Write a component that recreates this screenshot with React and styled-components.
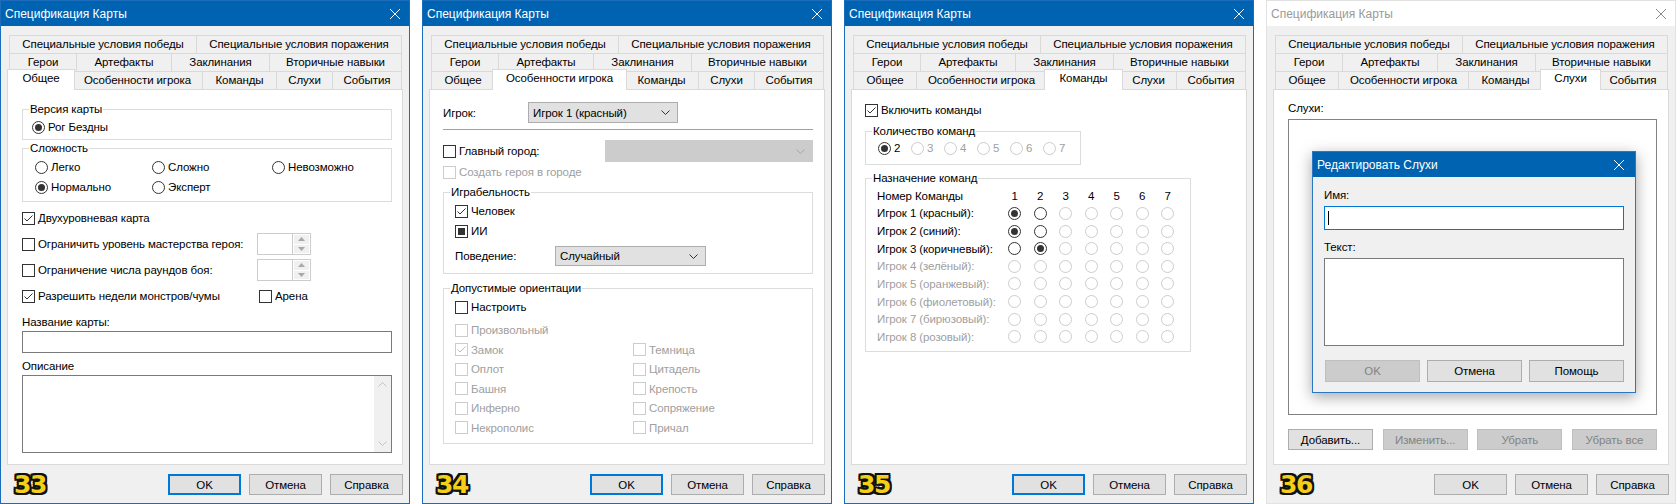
import React from "react";
import styled, { createGlobalStyle } from "styled-components";

const GlobalStyle = createGlobalStyle`
  html, body { margin: 0; padding: 0; background: #fff; }
  body {
    font-family: "Liberation Sans", Arial, sans-serif;
    font-size: 11.5px;
    letter-spacing: -0.1px;
    color: #000;
  }
  * { box-sizing: border-box; }
`;

const ROWS = [
  [["Специальные условия победы", 188], ["Специальные условия поражения", 206]],
  [["Герои", 68], ["Артефакты", 96], ["Заклинания", 99], ["Вторичные навыки", 133]],
  [["Общее", 64], ["Особенности игрока", 131], ["Команды", 75], ["Слухи", 57], ["События", 70]],
];

const Page = styled.div`
  display: flex;
  gap: 12px;
  width: 1676px;
  height: 504px;
`;

const Frame = styled.div`
  position: relative;
  width: 410px;
  height: 504px;
  flex-shrink: 0;
  display: flex;
  flex-direction: column;
  background: #f0f0f0;
  border: 1px solid ${(p) => (p.$active ? "#1b6dbb" : "#e2e2e2")};
`;

const TitleBar = styled.div`
  height: 25px;
  flex-shrink: 0;
  display: flex;
  align-items: center;
  justify-content: space-between;
  padding-left: 4px;
  font-size: 12px;
  letter-spacing: 0;
  background: ${(p) => (p.$active ? "#0063b1" : "#fff")};
  color: ${(p) => (p.$active ? "#fff" : "#9a9a9a")};
`;

const CloseBtn = styled.div`
  width: ${(p) => p.$w || 28}px;
  height: 100%;
  display: flex;
  align-items: center;
  justify-content: center;
`;

const Body = styled.div`
  flex: 1;
  padding: 9px 6px 0;
  display: flex;
  flex-direction: column;
`;

const TabArea = styled.div`
  padding: 0 1px 0 2px;
`;

const TabRow = styled.div`
  display: flex;
  align-items: flex-start;
  height: 18px;
`;

const Tab = styled.div`
  flex-shrink: 0;
  width: ${(p) => p.$w + (p.$sel ? 4 : 0)}px;
  height: ${(p) => (p.$sel ? 21 : 18)}px;
  margin-top: ${(p) => (p.$sel ? -2 : 0)}px;
  margin-left: ${(p) => (p.$first ? 0 : -1) - (p.$sel ? 2 : 0)}px;
  margin-right: ${(p) => (p.$sel ? -2 : 0)}px;
  border: 1px solid #d9d9d9;
  border-bottom: none;
  background: ${(p) => (p.$sel ? "#fff" : "#f0f0f0")};
  position: relative;
  z-index: ${(p) => (p.$sel ? 2 : 1)};
  text-align: center;
  line-height: ${(p) => (p.$sel ? 17 : 16)}px;
  white-space: nowrap;
`;

const Panel = styled.div`
  height: 376px;
  flex-shrink: 0;
  background: #fff;
  border: 1px solid #d9d9d9;
  padding: ${(p) => p.$pad};
  display: flex;
  flex-direction: column;
`;

const Footer = styled.div`
  display: flex;
  align-items: center;
  gap: 8px;
  margin-top: 9px;
`;

const Badge = styled.span`
  margin-left: 7px;
  margin-right: auto;
  font-family: "DejaVu Sans", sans-serif;
  font-weight: 700;
  font-size: 25px;
  line-height: 21px;
  letter-spacing: -1.5px;
  color: #f5cf17;
  text-shadow: 2px 0 0 #111, -2px 0 0 #111, 0 2px 0 #111, 0 -2px 0 #111,
    2px 2px 0 #111, -2px 2px 0 #111, 2px -2px 0 #111, -2px -2px 0 #111;
`;

const Btn = styled.div`
  width: ${(p) => p.$w || 73}px;
  height: ${(p) => p.$h || 21}px;
  flex-shrink: 0;
  display: flex;
  align-items: center;
  justify-content: center;
  background: ${(p) => (p.$dis ? "#cccccc" : "#e1e1e1")};
  border: ${(p) => (p.$def ? "2px solid #0078d7" : p.$dis ? "1px solid #bfbfbf" : "1px solid #adadad")};
  color: ${(p) => (p.$dis ? "#838383" : "#000")};
`;

const Fieldset = styled.fieldset`
  margin: ${(p) => p.$mt || 0}px 0 0;
  padding: 0;
  border: 1px solid #dcdcdc;
  min-width: 0;
  flex-shrink: 0;
  width: ${(p) => (p.$w ? `${p.$w}px` : "auto")};
  align-self: ${(p) => (p.$w ? "flex-start" : "stretch")};
`;

const Legend = styled.legend`
  margin-left: 6px;
  padding: 0 1px;
  line-height: 14px;
`;

const GroupInner = styled.div`
  padding: ${(p) => p.$pad};
`;

const Row = styled.div`
  display: flex;
  align-items: center;
  height: ${(p) => p.$h || 20}px;
  margin-top: ${(p) => p.$mt || 0}px;
  flex-shrink: 0;
`;

const Grid = styled.div`
  display: grid;
  grid-template-columns: ${(p) => p.$cols};
  grid-auto-rows: ${(p) => p.$row}px;
  align-items: center;
  margin-top: ${(p) => p.$mt || 0}px;
  flex-shrink: 0;
`;

const Label = styled.div`
  line-height: 14px;
  width: ${(p) => (p.$w ? `${p.$w}px` : "auto")};
  margin-top: ${(p) => p.$mt || 0}px;
  color: ${(p) => (p.$dis ? "#a0a0a0" : "#000")};
  flex-shrink: 0;
  white-space: nowrap;
`;

const Choice = styled.div`
  display: flex;
  align-items: center;
  gap: 3px;
  white-space: nowrap;
  color: ${(p) => (p.$dis ? "#a0a0a0" : "#000")};
  margin-left: ${(p) => p.$ml || 0}px;
  width: ${(p) => (p.$w ? `${p.$w}px` : "auto")};
`;

const Box = styled.span`
  width: 13px;
  height: 13px;
  flex-shrink: 0;
  border: 1px solid ${(p) => (p.$dis ? "#cccccc" : "#333")};
  background: #fff;
  display: flex;
  align-items: center;
  justify-content: center;
`;

const Mixed = styled.span`
  width: 7px;
  height: 7px;
  background: #333;
`;

const Circle = styled(Box)`
  border-radius: 50%;
`;

const Dot = styled.span`
  width: 7px;
  height: 7px;
  border-radius: 50%;
  background: #333;
`;

const Combo = styled.div`
  width: ${(p) => p.$w}px;
  height: ${(p) => p.$h || 21}px;
  margin-left: ${(p) => (p.$right ? "auto" : "0")};
  flex-shrink: 0;
  display: flex;
  align-items: center;
  justify-content: space-between;
  padding: 0 7px 0 4px;
  background: ${(p) => (p.$dis ? "#cccccc" : "#e1e1e1")};
  border: 1px solid ${(p) => (p.$dis ? "#cccccc" : "#adadad")};
`;

const Separator = styled.div`
  margin-top: 6px;
  height: 2px;
  border-top: 1px solid #a0a0a0;
  border-bottom: 1px solid #fff;
  flex-shrink: 0;
`;

const TextBox = styled.div`
  height: ${(p) => p.$h}px;
  margin-top: ${(p) => p.$mt || 0}px;
  flex-shrink: 0;
  background: #fff;
  border: 1px solid ${(p) => p.$bc || "#7a7a7a"};
  display: flex;
  justify-content: ${(p) => (p.$end ? "flex-end" : "flex-start")};
  align-items: ${(p) => (p.$end ? "stretch" : "center")};
`;

const VScroll = styled.div`
  width: 17px;
  background: #f0f0f0;
  display: flex;
  flex-direction: column;
  justify-content: space-between;
  align-items: center;
  padding: 6px 0;
`;

const Caret = styled.span`
  width: 1px;
  height: 14px;
  margin-left: 3px;
  background: #000;
`;

const Spin = styled.div`
  display: flex;
  width: 54px;
  height: 22px;
`;

const SpinField = styled.div`
  flex: 1;
  border: 1px solid #cccccc;
  background: #fff;
`;

const SpinBtns = styled.div`
  width: 18px;
  display: flex;
  flex-direction: column;
  border: 1px solid #cccccc;
  border-left: none;
  padding: 1px;
  gap: 1px;
`;

const SpinBtn = styled.div`
  flex: 1;
  background: #f0f0f0;
  display: flex;
  align-items: center;
  justify-content: center;
`;

const Head = styled.div`
  text-align: center;
`;

const Cell = styled.div`
  display: flex;
  justify-content: center;
`;

const BtnRow = styled.div`
  display: flex;
  justify-content: space-between;
  gap: ${(p) => p.$gap || 0}px;
  margin-top: ${(p) => p.$mt || 0}px;
  padding-left: ${(p) => p.$pl || 0}px;
  flex-shrink: 0;
`;

const Modal = styled.div`
  position: absolute;
  left: 45px;
  top: 150px;
  width: 324px;
  border: 1px solid #2a78c4;
  background: #f0f0f0;
  box-shadow: 0 4px 14px rgba(0, 0, 0, 0.35);
  z-index: 5;
  display: flex;
  flex-direction: column;
`;

const ModalBody = styled.div`
  padding: 11px 11px 10px;
  display: flex;
  flex-direction: column;
`;

const XIcon = ({ color }) => (
  <svg width="10" height="10" viewBox="0 0 10 10">
    <path d="M0 0L10 10M10 0L0 10" stroke={color} strokeWidth="1" />
  </svg>
);

const Chevron = ({ color = "#333" }) => (
  <svg width="9" height="5" viewBox="0 0 9 5">
    <path d="M0.5 0.5L4.5 4.5L8.5 0.5" stroke={color} fill="none" />
  </svg>
);

const Tri = ({ up }) => (
  <svg width="7" height="4" viewBox="0 0 7 4">
    <path d={up ? "M0 4L3.5 0L7 4Z" : "M0 0L3.5 4L7 0Z"} fill="#a8a8a8" />
  </svg>
);

const Check = ({ label, on, mixed, dis, ml, w }) => (
  <Choice $dis={dis} $ml={ml} $w={w}>
    <Box $dis={dis}>
      {on && (
        <svg width="11" height="11" viewBox="0 0 11 11">
          <path d="M1.5 5.5L4 8L9.5 2.5" stroke={dis ? "#bcbcbc" : "#333"} fill="none" />
        </svg>
      )}
      {mixed && <Mixed />}
    </Box>
    {label}
  </Choice>
);

const Radio = ({ label, on, dis, w }) => (
  <Choice $dis={dis} $w={w}>
    <Circle $dis={dis}>{on && <Dot />}</Circle>
    {label}
  </Choice>
);

const Group = ({ legend, mt, w, pad, children }) => (
  <Fieldset $mt={mt} $w={w}>
    <Legend>{legend}</Legend>
    <GroupInner $pad={pad}>{children}</GroupInner>
  </Fieldset>
);

const Spinner = () => (
  <Spin>
    <SpinField />
    <SpinBtns>
      <SpinBtn>
        <Tri up />
      </SpinBtn>
      <SpinBtn>
        <Tri />
      </SpinBtn>
    </SpinBtns>
  </Spin>
);

function Window({ active = true, sel, badge, pad, children, overlay }) {
  return (
    <Frame $active={active}>
      <TitleBar $active={active}>
        Спецификация Карты
        <CloseBtn>
          <XIcon color={active ? "#fff" : "#8a8a8a"} />
        </CloseBtn>
      </TitleBar>
      <Body>
        <TabArea>
          {ROWS.map((row, ri) => (
            <TabRow key={ri}>
              {row.map(([t, w], i) => (
                <Tab key={t} $w={w} $first={i === 0} $sel={t === sel}>
                  {t}
                </Tab>
              ))}
            </TabRow>
          ))}
        </TabArea>
        <Panel $pad={pad}>{children}</Panel>
        <Footer>
          <Badge>{badge}</Badge>
          <Btn $def={active}>OK</Btn>
          <Btn>Отмена</Btn>
          <Btn>Справка</Btn>
        </Footer>
      </Body>
      {overlay}
    </Frame>
  );
}

function GeneralTab() {
  return (
    <Window sel="Общее" badge="33" pad="12px 10px 0 14px">
      <Group legend="Версия карты" pad="1px 0 2px 9px">
        <Row>
          <Radio on label="Рог Бездны" />
        </Row>
      </Group>
      <Group legend="Сложность" mt={1} pad="2px 0 4px 12px">
        <Grid $cols="117px 120px auto" $row={20}>
          <Radio label="Легко" />
          <Radio label="Сложно" />
          <Radio label="Невозможно" />
          <Radio on label="Нормально" />
          <Radio label="Эксперт" />
        </Grid>
      </Group>
      <Grid $cols="235px auto" $row={26} $mt={3}>
        <Check on label="Двухуровневая карта" />
        <span />
        <Check label="Ограничить уровень мастерства героя:" />
        <Spinner />
        <Check label="Ограничение числа раундов боя:" />
        <Spinner />
        <Check on label="Разрешить недели монстров/чумы" />
        <Check label="Арена" ml={2} />
      </Grid>
      <Label $mt={6}>Название карты:</Label>
      <TextBox $h={22} $mt={2} />
      <Label $mt={6}>Описание</Label>
      <TextBox $h={78} $mt={2} $end>
        <VScroll>
          <svg width="9" height="5" viewBox="0 0 9 5">
            <path d="M0.5 4.5L4.5 0.5L8.5 4.5" stroke="#c2c2c2" fill="none" />
          </svg>
          <Chevron color="#c2c2c2" />
        </VScroll>
      </TextBox>
    </Window>
  );
}

const TOWNS = [
  ["Замок", "Темница"],
  ["Оплот", "Цитадель"],
  ["Башня", "Крепость"],
  ["Инферно", "Сопряжение"],
  ["Некрополис", "Причал"],
];

function PlayerTab() {
  return (
    <Window sel="Особенности игрока" badge="34" pad="12px 11px 0 13px">
      <Row $h={21}>
        <Label $w={85}>Игрок:</Label>
        <Combo $w={150}>
          Игрок 1 (красный)
          <Chevron />
        </Combo>
      </Row>
      <Separator />
      <Row $h={22} $mt={9}>
        <Check label="Главный город:" />
        <Combo $w={208} $h={22} $dis $right>
          <span />
          <Chevron color="#a6a6a6" />
        </Combo>
      </Row>
      <Row>
        <Check dis label="Создать героя в городе" />
      </Row>
      <Group legend="Играбельность" mt={3} pad="2px 0 6px 11px">
        <Row>
          <Check on label="Человек" />
        </Row>
        <Row>
          <Check mixed label="ИИ" />
        </Row>
        <Row $h={22} $mt={4}>
          <Label $w={100}>Поведение:</Label>
          <Combo $w={151} $h={20}>
            Случайный
            <Chevron />
          </Combo>
        </Row>
      </Group>
      <Group legend="Допустимые ориентации" mt={7} pad="2px 0 5px 11px">
        <Row>
          <Check label="Настроить" />
        </Row>
        <Row $mt={3}>
          <Check dis label="Произвольный" />
        </Row>
        <Grid $cols="178px auto" $row={19.5}>
          {TOWNS.flat().map((t) => (
            <Check key={t} dis on={t === "Замок"} label={t} />
          ))}
        </Grid>
      </Group>
    </Window>
  );
}

const PLAYERS = [
  ["Игрок 1 (красный):", 1],
  ["Игрок 2 (синий):", 1],
  ["Игрок 3 (коричневый):", 2],
  ["Игрок 4 (зелёный):", 0],
  ["Игрок 5 (оранжевый):", 0],
  ["Игрок 6 (фиолетовый):", 0],
  ["Игрок 7 (бирюзовый):", 0],
  ["Игрок 8 (розовый):", 0],
];
const COLS = [1, 2, 3, 4, 5, 6, 7];

function TeamsTab() {
  return (
    <Window sel="Команды" badge="35" pad="10px 11px 0 13px">
      <Row>
        <Check on label="Включить команды" />
      </Row>
      <Group legend="Количество команд" mt={4} w={216} pad="1px 0 7px 12px">
        <Row $h={18}>
          {[2, 3, 4, 5, 6, 7].map((n) => (
            <Radio key={n} w={33} on={n === 2} dis={n !== 2} label={n} />
          ))}
        </Row>
      </Group>
      <Group legend="Назначение команд" mt={6} w={326} pad="2px 0 5px 11px">
        <Grid $cols="125px repeat(7, 25.5px)" $row={17.625}>
          <Label>Номер Команды</Label>
          {COLS.map((c) => (
            <Head key={c}>{c}</Head>
          ))}
          {PLAYERS.map(([name, team], ri) => (
            <React.Fragment key={name}>
              <Label $dis={ri > 2}>{name}</Label>
              {COLS.map((c) => (
                <Cell key={c}>
                  <Circle $dis={ri > 2 || c > 2}>{team === c && <Dot />}</Circle>
                </Cell>
              ))}
            </React.Fragment>
          ))}
        </Grid>
      </Group>
    </Window>
  );
}

function RumorDialog() {
  return (
    <Modal>
      <TitleBar $active>
        Редактировать Слухи
        <CloseBtn $w={32}>
          <XIcon color="#fff" />
        </CloseBtn>
      </TitleBar>
      <ModalBody>
        <Label>Имя:</Label>
        <TextBox $h={24} $mt={4} $bc="#0078d7">
          <Caret />
        </TextBox>
        <Label $mt={10}>Текст:</Label>
        <TextBox $h={88} $mt={4} />
        <BtnRow $mt={14} $pl={1} $gap={7}>
          <Btn $w={95} $h={22} $dis>
            OK
          </Btn>
          <Btn $w={95} $h={22}>
            Отмена
          </Btn>
          <Btn $w={95} $h={22}>
            Помощь
          </Btn>
        </BtnRow>
      </ModalBody>
    </Modal>
  );
}

function RumorsTab() {
  return (
    <Window active={false} sel="Слухи" badge="36" pad="11px 11px 0 14px" overlay={<RumorDialog />}>
      <Label>Слухи:</Label>
      <TextBox $h={296} $mt={4} $bc="#828282" />
      <BtnRow $mt={14}>
        <Btn $w={85}>Добавить...</Btn>
        <Btn $w={85} $dis>
          Изменить...
        </Btn>
        <Btn $w={85} $dis>
          Убрать
        </Btn>
        <Btn $w={85} $dis>
          Убрать все
        </Btn>
      </BtnRow>
    </Window>
  );
}

export default function App() {
  return (
    <>
      <GlobalStyle />
      <Page>
        <GeneralTab />
        <PlayerTab />
        <TeamsTab />
        <RumorsTab />
      </Page>
    </>
  );
}
